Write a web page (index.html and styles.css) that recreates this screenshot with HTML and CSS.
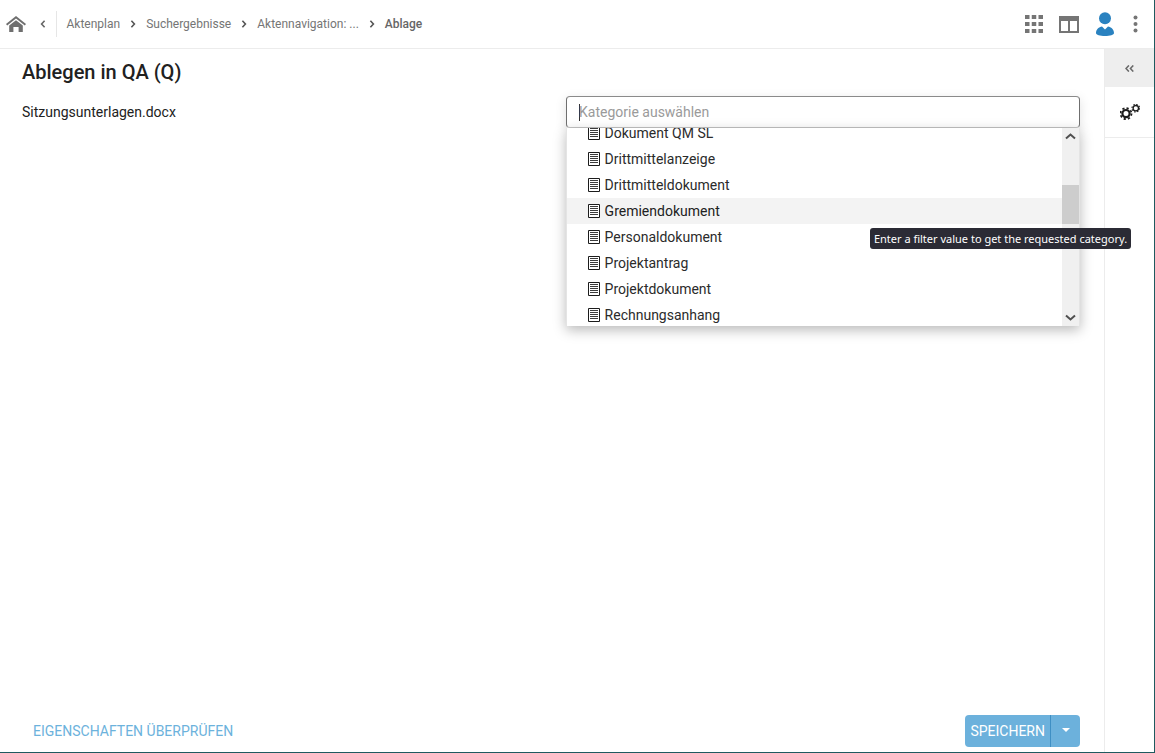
FILE: index.html
```html
<!DOCTYPE html>
<html lang="de">
<head>
<meta charset="utf-8">
<title>Ablegen in QA (Q)</title>
<link rel="stylesheet" href="styles.css">
</head>
<body>
<div class="app">
  <header class="topbar">
    <svg class="home" viewBox="0 0 20 16" width="20" height="16"><path fill="#6f6f6f" d="M10 0 L20 8 L18.8 9.6 L10 2.6 L1.2 9.6 L0 8 Z M3.2 9.6 L10 4.2 L16.8 9.6 V16 H12.6 V11 H7.4 V16 H3.2 Z"/></svg>
    <svg class="back" viewBox="0 0 6 8" width="6" height="8"><path fill="none" stroke="#666" stroke-width="1.6" d="M4.6 .8 L1.6 4 L4.6 7.2"/></svg>
    <span class="vsep"></span>
    <nav class="crumbs">
      <span>Aktenplan</span>
      <svg class="chev" viewBox="0 0 6 8" width="6" height="8"><path fill="none" stroke="#555" stroke-width="1.6" d="M1.4 .8 L4.4 4 L1.4 7.2"/></svg>
      <span>Suchergebnisse</span>
      <svg class="chev" viewBox="0 0 6 8" width="6" height="8"><path fill="none" stroke="#555" stroke-width="1.6" d="M1.4 .8 L4.4 4 L1.4 7.2"/></svg>
      <span>Aktennavigation: ...</span>
      <svg class="chev" viewBox="0 0 6 8" width="6" height="8"><path fill="none" stroke="#555" stroke-width="1.6" d="M1.4 .8 L4.4 4 L1.4 7.2"/></svg>
      <span class="current">Ablage</span>
    </nav>
    <div class="actions">
      <svg class="apps" viewBox="0 0 18 18" width="18" height="18"><path fill="#757575" d="M0 0h4.5v4H0zM6.75 0h4.5v4h-4.5zM13.5 0H18v4h-4.5zM0 7h4.5v4H0zM6.75 7h4.5v4h-4.5zM13.5 7H18v4h-4.5zM0 14h4.5v4H0zM6.75 14h4.5v4h-4.5zM13.5 14H18v4h-4.5z"/></svg>
      <svg class="layout" viewBox="0 0 20 17" width="20" height="17"><path fill="#757575" fill-rule="evenodd" d="M0 0h20v17H0zM2 5v10h7V5zM11 5v10h7V5z"/></svg>
      <svg class="user" viewBox="0 0 18 24" width="18" height="24"><circle cx="9" cy="6.2" r="6" fill="#2a82c0"/><path fill="#2a82c0" d="M0 21 C0 17 3 15 6 14.4 L9 17.6 L12 14.4 C15 15 18 17 18 21 C18 23 14 24 9 24 C4 24 0 23 0 21Z"/></svg>
      <svg class="dots" viewBox="0 0 5 18" width="5" height="18"><circle cx="2.5" cy="2.5" r="2" fill="#757575"/><circle cx="2.5" cy="9" r="2" fill="#757575"/><circle cx="2.5" cy="15.5" r="2" fill="#757575"/></svg>
    </div>
  </header>
  <div class="body">
    <main class="content">
      <h1 class="title">Ablegen in QA (Q)</h1>
      <div class="form-row">
        <div class="filename">Sitzungsunterlagen.docx</div>
        <div class="picker">
          <div class="input"><span class="caret"></span><span class="placeholder">Kategorie auswählen</span></div>
          <div class="dropdown">
            <ul class="options">
              <li class="opt"><svg class="doc" viewBox="0 0 12 14" width="12" height="14"><use href="#doc"/></svg>Dokument QM SL</li>
              <li class="opt"><svg class="doc" viewBox="0 0 12 14" width="12" height="14"><use href="#doc"/></svg>Drittmittelanzeige</li>
              <li class="opt"><svg class="doc" viewBox="0 0 12 14" width="12" height="14"><use href="#doc"/></svg>Drittmitteldokument</li>
              <li class="opt hover"><svg class="doc" viewBox="0 0 12 14" width="12" height="14"><use href="#doc"/></svg>Gremiendokument</li>
              <li class="opt"><svg class="doc" viewBox="0 0 12 14" width="12" height="14"><use href="#doc"/></svg>Personaldokument</li>
              <li class="opt"><svg class="doc" viewBox="0 0 12 14" width="12" height="14"><use href="#doc"/></svg>Projektantrag</li>
              <li class="opt"><svg class="doc" viewBox="0 0 12 14" width="12" height="14"><use href="#doc"/></svg>Projektdokument</li>
              <li class="opt"><svg class="doc" viewBox="0 0 12 14" width="12" height="14"><use href="#doc"/></svg>Rechnungsanhang</li>
            </ul>
            <div class="scrollbar">
              <svg class="arrow" viewBox="0 0 17 17" width="17" height="17"><path fill="none" stroke="#505050" stroke-width="2" d="M4 10.5 L8.5 6.5 L13 10.5"/></svg>
              <div class="track"><div class="thumb"></div></div>
              <svg class="arrow" viewBox="0 0 17 17" width="17" height="17"><path fill="none" stroke="#505050" stroke-width="2" d="M4 6.5 L8.5 10.5 L13 6.5"/></svg>
            </div>
          </div>
          <div class="tooltip">Enter a filter value to get the requested category.</div>
        </div>
      </div>
      <footer class="footer">
        <a class="link">EIGENSCHAFTEN ÜBERPRÜFEN</a>
        <div class="split">
          <span class="save">SPEICHERN</span>
          <span class="more"><span class="tri"></span></span>
        </div>
      </footer>
    </main>
    <aside class="side">
      <div class="collapse">
        <svg viewBox="0 0 9 7" width="9" height="7"><path fill="none" stroke="#6a6a6a" stroke-width="1.5" d="M3.9 .4 L1 3.5 L3.9 6.6 M8.3 .4 L5.4 3.5 L8.3 6.6"/></svg>
      </div>
      <div class="tool">
        <svg viewBox="0 0 20 16" width="20" height="16"><g fill="none" stroke="#1c1c1c"><circle cx="6" cy="9.6" r="3.6" stroke-width="2.2"/><circle cx="6" cy="9.6" r="5.5" stroke-width="1.8" stroke-dasharray="2.2 2.1"/><circle cx="15.8" cy="4.2" r="2.7" stroke-width="1.3"/><circle cx="15.8" cy="4.2" r="3.8" stroke-width="1.1" stroke-dasharray="1.5 1.48"/></g></svg>
      </div>
    </aside>
  </div>
</div>
<svg class="defs" width="0" height="0"><defs><g id="doc"><path fill="#fff" stroke="#1c1c1c" d="M.5.5h11v13H.5z"/><path fill="none" stroke="#3c3c3c" d="M2 2.5h8M2 4.5h8M2 6.5h8M2 8.5h8M2 10.5h8"/></g></defs></svg>
</body>
</html>
```
FILE: styles.css
```css
* { box-sizing: border-box; }
html, body { margin: 0; height: 100%; }
body { font-family: Roboto, "Liberation Sans", sans-serif; color: #212121; background: #fff; overflow: hidden; }
.defs { position: absolute; }
.app { width: 1155px; height: 753px; display: flex; flex-direction: column; border-right: 1px solid #1f5a5f; border-bottom: 1px solid #1f5a5f; }
.topbar { height: 49px; flex: none; display: flex; align-items: center; border-bottom: 1px solid #ececec; padding-left: 6px; padding-right: 16px; }
.home { flex: none; }
.back { flex: none; margin-left: 14px; }
.vsep { width: 1px; height: 26px; background: #e6e6e6; margin-left: 10px; }
.crumbs { display: flex; align-items: center; margin-left: 9.5px; font-size: 12px; color: #757575; }
.chev { margin: 0 10px; flex: none; }
.current { font-weight: 500; color: #666; }
.actions { margin-left: auto; display: flex; align-items: center; }
.layout { margin-left: 16px; }
.user { margin-left: 17px; }
.dots { margin-left: 19px; }
.body { flex: 1; display: flex; min-height: 0; }
.content { flex: 1; display: flex; flex-direction: column; padding: 0 24px 5px 22px; min-width: 0; }
.title { margin: 12px 0 0; font-size: 20px; font-weight: 500; line-height: 22px; color: #212121; }
.form-row { display: flex; justify-content: space-between; align-items: flex-start; margin-top: 13px; }
.filename { font-size: 14px; line-height: 32px; color: #212121; }
.picker { position: relative; width: 514px; height: 32px; }
.input { height: 32px; border: 1px solid #6f6f6f; border-top-color: #8a8a8a; border-bottom-color: #c4c4c4; border-radius: 4px; display: flex; align-items: center; padding-left: 12px; background: #fff; box-shadow: 0 3px 12px rgba(0,0,0,.12); }
.caret { width: 1px; height: 17px; background: #333; flex: none; margin-right: -1px; }
.placeholder { font-size: 14px; color: #9a9a9a; }
.dropdown { position: absolute; top: 32px; left: 0; width: 514px; height: 198px; background: #fff; display: flex; box-shadow: 0 4px 12px rgba(0,0,0,.28); overflow: hidden; border-left: 1px solid #e4e4e4; border-right: 1px solid #e4e4e4; }
.options { list-style: none; margin: -8px 0 0; padding: 0; flex: 1; min-width: 0; }
.opt { height: 26px; flex: none; display: flex; align-items: center; padding-left: 21px; font-size: 14px; color: #2b2b2b; gap: 4.6px; }
.opt.hover { background: #f3f3f3; color: #212121; }
.doc { flex: none; }
.scrollbar { width: 17px; flex: none; display: flex; flex-direction: column; background: #f0f0f0; }
.arrow { flex: none; }
.track { flex: 1; padding-top: 40px; }
.thumb { height: 39px; background: #cdcdcd; }
.tooltip { position: absolute; left: 304px; top: 132px; width: 261px; height: 21px; background: #2b2b35; color: #fff; border-radius: 3px; font-family: "Noto Sans", sans-serif; font-size: 11px; line-height: 21px; text-align: center; white-space: nowrap; }
.footer { margin-top: auto; display: flex; justify-content: space-between; align-items: center; padding-left: 11px; }
.link { font-size: 14px; color: #6cb2dc; }
.split { display: flex; height: 32px; background: #6cb1dc; border-radius: 4px; color: #fff; font-size: 14px; }
.save { display: flex; align-items: center; padding: 0 5px; border-right: 1px solid #3f8fc4; }
.more { width: 29px; display: flex; align-items: center; justify-content: center; }
.tri { width: 0; height: 0; border-left: 4px solid transparent; border-right: 4px solid transparent; border-top: 4px solid #fff; margin-top: -2px; }
.side { width: 50px; flex: none; border-left: 1px solid #ececec; }
.collapse { height: 38px; background: #eeeeee; display: flex; align-items: center; justify-content: center; }
.tool { height: 51px; border-bottom: 1px solid #ececec; display: flex; align-items: center; justify-content: center; }
```
